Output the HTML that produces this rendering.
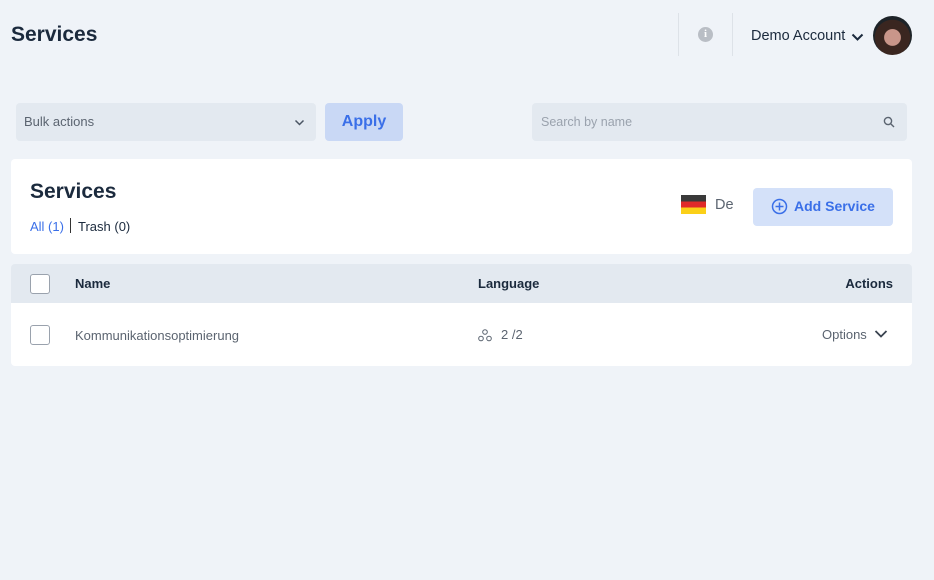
<!DOCTYPE html>
<html><head><meta charset="utf-8"><style>
*{box-sizing:border-box;margin:0;padding:0}
body{width:934px;height:580px;background:#eff3f8;font-family:"Liberation Sans",sans-serif;color:#1b2a3d;position:relative;overflow:hidden}
.abs{position:absolute}
</style></head><body>
<div class="abs" style="left:11px;top:23px;font-size:21px;font-weight:bold;color:#1b2a3d">Services</div>
<div class="abs" style="left:678px;top:13px;width:1px;height:43px;background:#dde2e8"></div>
<div class="abs" style="left:732px;top:13px;width:1px;height:43px;background:#dde2e8"></div>
<div class="abs" style="left:698px;top:27px;width:15px;height:15px;border-radius:50%;background:#b9bec5;color:#fff;font-size:11px;font-weight:bold;text-align:center;line-height:15px;font-family:'Liberation Serif',serif">i</div>
<div class="abs" style="left:751px;top:28px;font-size:14.5px;color:#1b2a3d">Demo Account</div>
<svg class="abs" style="left:851px;top:33px" width="13" height="9" viewBox="0 0 13 9"><path d="M1.5 1.5L6.5 6.5L11.5 1.5" stroke="#1b2a3d" stroke-width="2" fill="none"/></svg>
<div class="abs" style="left:873px;top:16px;width:39px;height:39px;border-radius:50%;background:radial-gradient(circle at 50% 55%,#c9968a 0 28%,#3a2620 30% 60%,#1d2328 62%)"></div>

<div class="abs" style="left:16px;top:103px;width:300px;height:38px;background:#e3e9f0;border-radius:4px"></div>
<div class="abs" style="left:24px;top:114px;font-size:13px;color:#5b6470">Bulk actions</div>
<svg class="abs" style="left:294px;top:119px" width="11" height="8" viewBox="0 0 11 8"><path d="M1.5 1.5L5.5 5.5L9.5 1.5" stroke="#4a5563" stroke-width="1.5" fill="none"/></svg>
<div class="abs" style="left:325px;top:103px;width:78px;height:38px;background:#c9d8f5;border-radius:4px;color:#3a6fe8;font-size:16px;font-weight:bold;text-align:center;line-height:38px">Apply</div>
<div class="abs" style="left:532px;top:103px;width:375px;height:38px;background:#e3e9f0;border-radius:4px"></div>
<div class="abs" style="left:541px;top:115px;font-size:12.5px;color:#9aa2ad">Search by name</div>
<svg class="abs" style="left:883px;top:116px" width="12" height="12" viewBox="0 0 12 12"><circle cx="5" cy="5" r="3.6" stroke="#5b6470" stroke-width="1.4" fill="none"/><path d="M7.7 7.7L11 11" stroke="#5b6470" stroke-width="1.4"/></svg>

<div class="abs" style="left:11px;top:159px;width:901px;height:95px;background:#fff;border-radius:4px"></div>
<div class="abs" style="left:30px;top:180px;font-size:21px;font-weight:bold;color:#1b2a3d">Services</div>
<div class="abs" style="left:30px;top:219px;font-size:13px;color:#3a6fe8">All (1)</div>
<div class="abs" style="left:70px;top:218px;width:1px;height:15px;background:#333"></div>
<div class="abs" style="left:78px;top:219px;font-size:13px;color:#1b2a3d">Trash (0)</div>
<div class="abs" style="left:681px;top:195px;width:25px;height:19px;background:linear-gradient(#3a3a3a 0 33%,#e02a2a 33% 66%,#fbd018 66%)"></div>
<div class="abs" style="left:715px;top:197px;font-size:14.5px;color:#5b6470">De</div>
<div class="abs" style="left:753px;top:188px;width:140px;height:38px;background:#d4e1f9;border-radius:4px"></div>
<svg class="abs" style="left:771px;top:198px" width="17" height="17" viewBox="0 0 17 17"><circle cx="8.5" cy="8.5" r="7" stroke="#3a6fe8" stroke-width="1.5" fill="none"/><path d="M8.5 4.5V12.5M4.5 8.5H12.5" stroke="#3a6fe8" stroke-width="1.5"/></svg>
<div class="abs" style="left:794px;top:198px;font-size:14px;font-weight:bold;color:#3a6fe8">Add Service</div>

<div class="abs" style="left:11px;top:264px;width:901px;height:39px;background:#e3e9f0;border-radius:4px 4px 0 0"></div>
<div class="abs" style="left:30px;top:274px;width:20px;height:20px;border:1.5px solid #9aa2ad;border-radius:3px;background:#fff"></div>
<div class="abs" style="left:75px;top:276px;font-size:13px;font-weight:bold">Name</div>
<div class="abs" style="left:478px;top:276px;font-size:13px;font-weight:bold">Language</div>
<div class="abs" style="right:41px;top:276px;font-size:13px;font-weight:bold">Actions</div>
<div class="abs" style="left:11px;top:303px;width:901px;height:63px;background:#fff;border-radius:0 0 4px 4px"></div>
<div class="abs" style="left:30px;top:325px;width:20px;height:20px;border:1.5px solid #9aa2ad;border-radius:3px"></div>
<div class="abs" style="left:75px;top:328px;font-size:13px;color:#5b6470">Kommunikationsoptimierung</div>
<svg class="abs" style="left:478px;top:328px" width="14" height="14" viewBox="0 0 14 14"><circle cx="7" cy="4" r="2.3" stroke="#5b6470" fill="none"/><circle cx="3" cy="10.5" r="2.3" stroke="#5b6470" fill="none"/><circle cx="11" cy="10.5" r="2.3" stroke="#5b6470" fill="none"/></svg>
<div class="abs" style="left:501px;top:327px;font-size:13px;color:#5b6470">2 /2</div>
<div class="abs" style="left:822px;top:327px;font-size:13px;color:#5b6470">Options</div>
<svg class="abs" style="left:874px;top:329px" width="14" height="10" viewBox="0 0 14 10"><path d="M1.5 2L7 7.5L12.5 2" stroke="#3a4350" stroke-width="1.8" fill="none"/></svg>
</body></html>
